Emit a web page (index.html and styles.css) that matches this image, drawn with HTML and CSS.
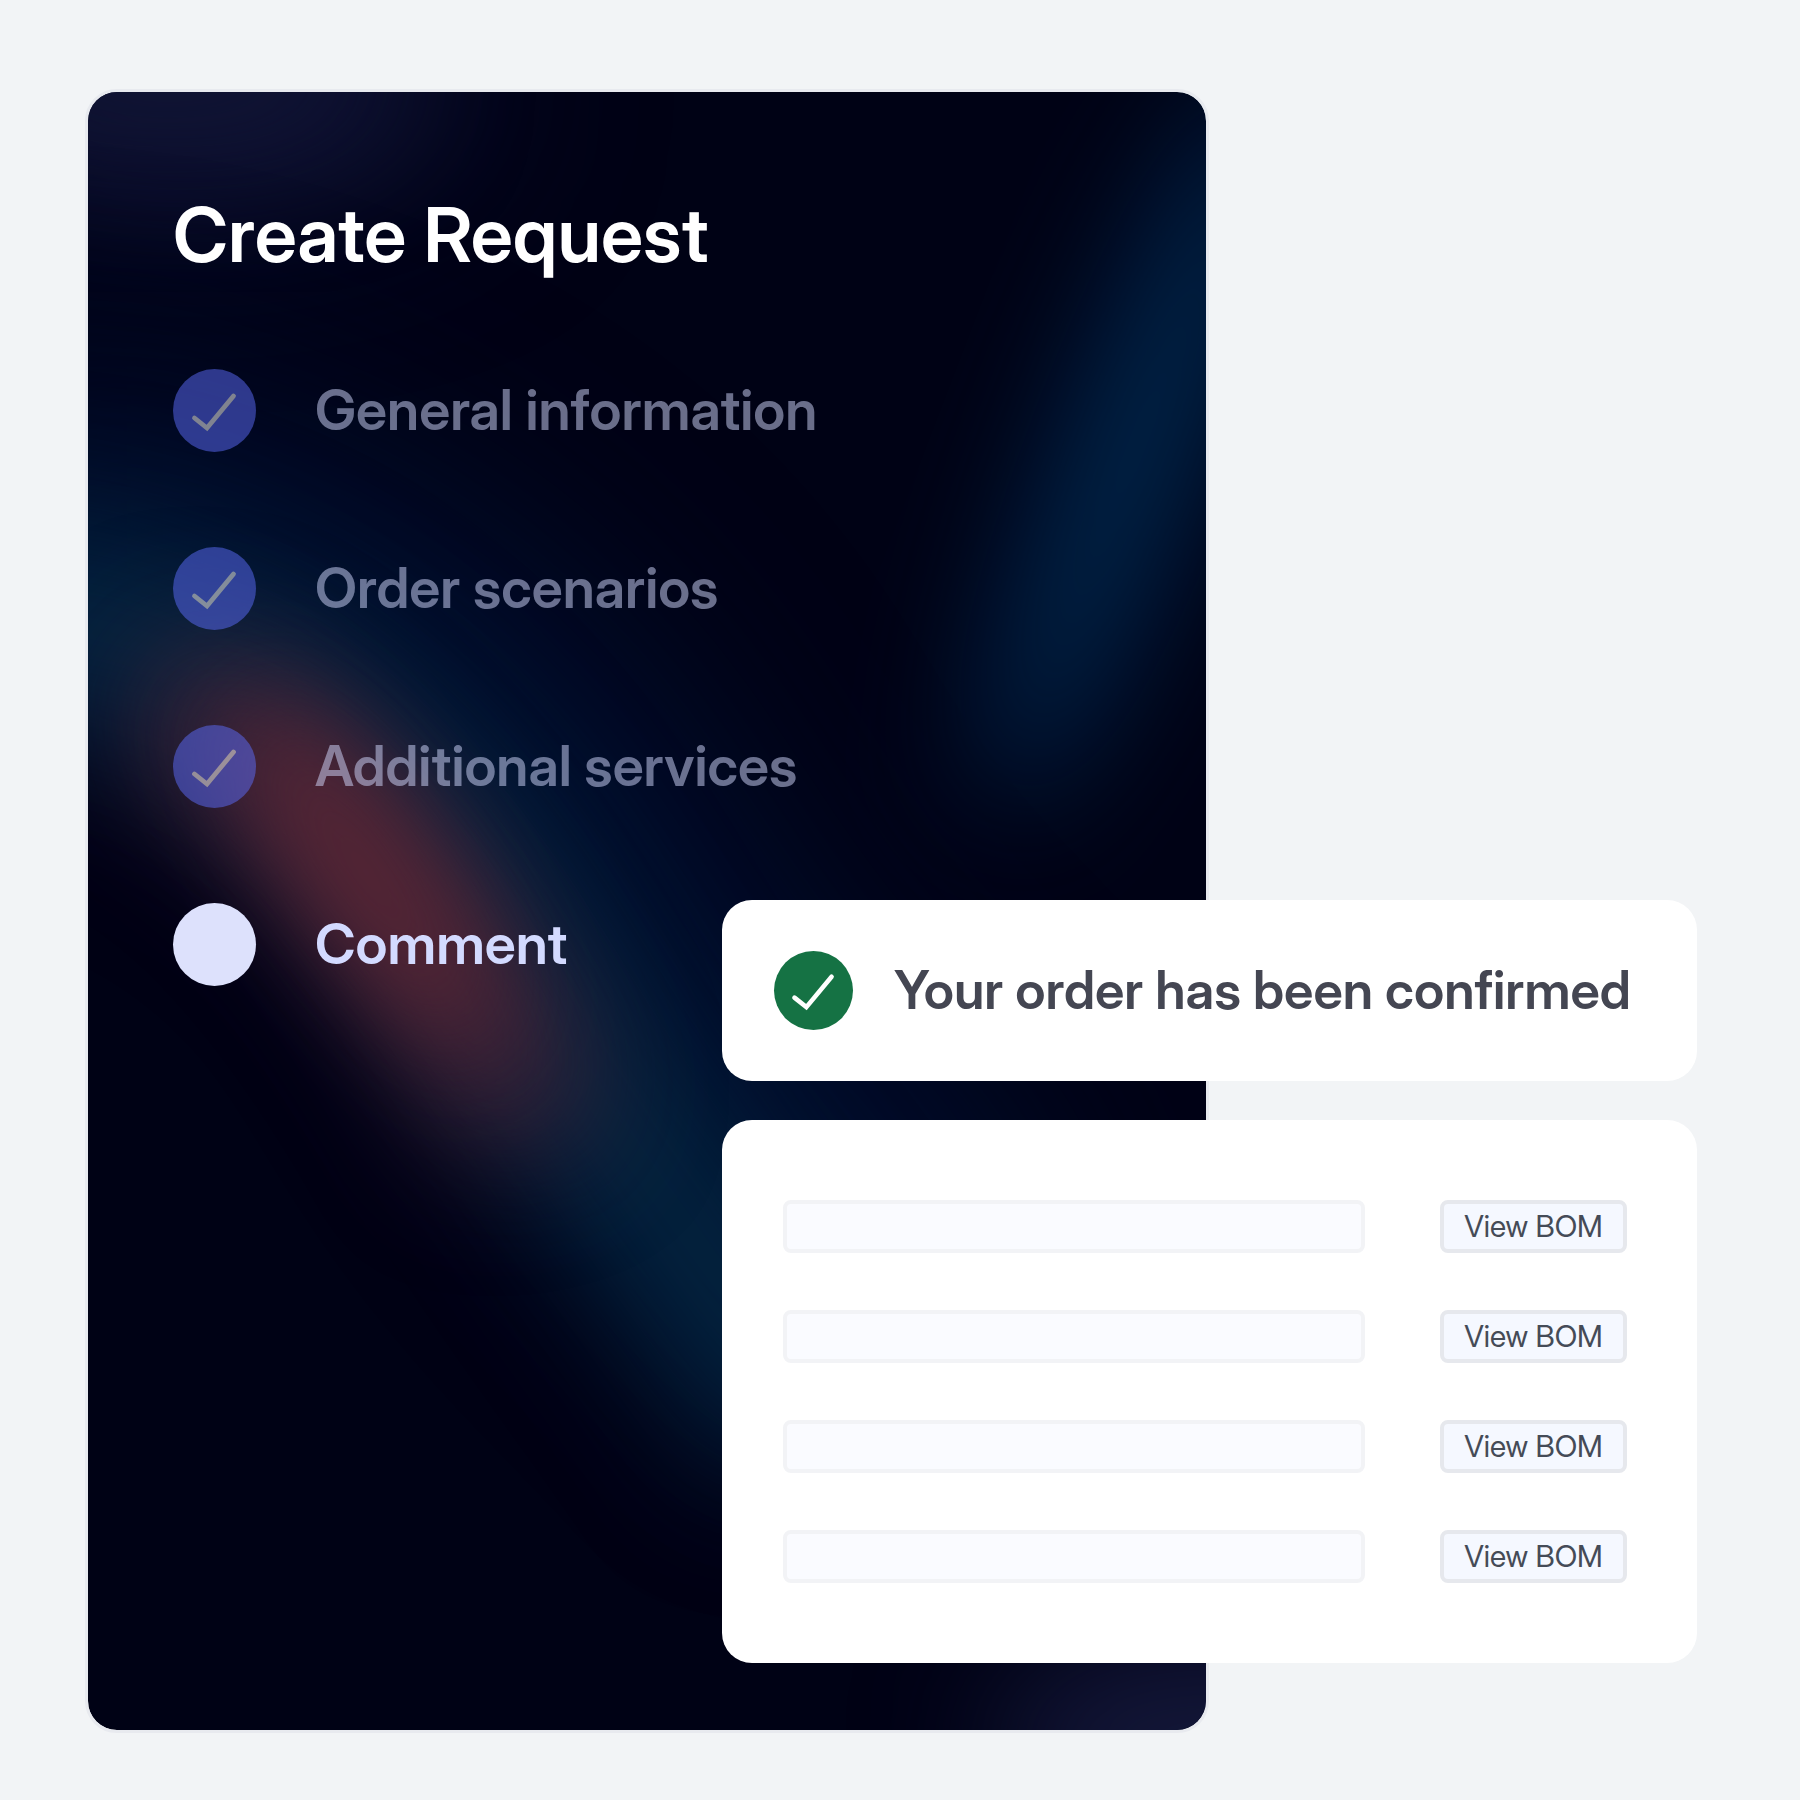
FILE: index.html
```html
<!DOCTYPE html>
<html lang="en">
<head>
    <meta charset="UTF-8">
    <meta name="viewport" content="width=device-width, initial-scale=1.0">
    <title>Create Request</title>
    <link rel="stylesheet" href="styles.css">
</head>
<body>
    <!-- Check mark shared by all icons -->
    <svg class="sprite" aria-hidden="true">
        <symbol id="check" viewBox="0 0 83 83">
            <path d="M21.5 49 L34 59 L60.5 27" fill="none" stroke="#FFFFFF" stroke-width="4.8" stroke-linecap="round"/>
        </symbol>
    </svg>

    <main class="stage">
        <!-- Request Steps -->
        <section class="request-panel">
            <svg class="glow" viewBox="0 0 1118 1638" preserveAspectRatio="none" color-interpolation-filters="sRGB" aria-hidden="true">
                <defs>
                    <filter id="blur-wide" x="-100%" y="-100%" width="300%" height="300%"><feGaussianBlur stdDeviation="95"/></filter>
                    <filter id="blur-mid" x="-100%" y="-100%" width="300%" height="300%"><feGaussianBlur stdDeviation="65"/></filter>
                    <filter id="blur-tight" x="-100%" y="-100%" width="300%" height="300%"><feGaussianBlur stdDeviation="55"/></filter>
                </defs>
                <ellipse cx="110" cy="-10" rx="270" ry="110" fill="#10143A" filter="url(#blur-wide)"/>
                <ellipse cx="80" cy="-10" rx="230" ry="70" fill="#111534" filter="url(#blur-mid)"/>
                <ellipse cx="1130" cy="1650" rx="230" ry="100" fill="#14183A" filter="url(#blur-mid)"/>
                <path d="M-120 440 C140 440 380 580 500 800 S740 1080 860 1240" fill="none" stroke="#000D2C" stroke-width="340" filter="url(#blur-wide)"/>
                <path d="M-150 520 C120 510 300 660 430 880 S620 1160 740 1340" fill="none" stroke="#03233F" stroke-width="190" filter="url(#blur-mid)"/>
                <path d="M70 610 C200 660 330 810 450 1040" fill="none" stroke="#432235" stroke-width="130" filter="url(#blur-mid)"/>
                <ellipse cx="278" cy="780" rx="210" ry="55" transform="rotate(55 278 780)" fill="#5F2634" filter="url(#blur-tight)"/>
                <ellipse cx="1050" cy="350" rx="65" ry="390" transform="rotate(21 1050 350)" fill="#002850" filter="url(#blur-mid)"/>
            </svg>
            <h1>Create Request</h1>
            <ol class="steps">
                <li class="step done">
                    <span class="step-icon"><svg aria-hidden="true"><use href="#check"/></svg></span>
                    <span>General information</span>
                </li>
                <li class="step done">
                    <span class="step-icon"><svg aria-hidden="true"><use href="#check"/></svg></span>
                    <span>Order scenarios</span>
                </li>
                <li class="step done">
                    <span class="step-icon"><svg aria-hidden="true"><use href="#check"/></svg></span>
                    <span>Additional services</span>
                </li>
                <li class="step" aria-current="step">
                    <span class="step-icon"></span>
                    <span>Comment</span>
                </li>
            </ol>
        </section>

        <!-- Confirmation and Orders -->
        <div class="cards">
            <section class="card confirmation">
                <span class="confirm-icon"><svg aria-hidden="true"><use href="#check"/></svg></span>
                <p>Your order has been confirmed</p>
            </section>
            <section class="card orders">
                <div class="order-row">
                    <div class="placeholder"></div>
                    <button type="button">View BOM</button>
                </div>
                <div class="order-row">
                    <div class="placeholder"></div>
                    <button type="button">View BOM</button>
                </div>
                <div class="order-row">
                    <div class="placeholder"></div>
                    <button type="button">View BOM</button>
                </div>
                <div class="order-row">
                    <div class="placeholder"></div>
                    <button type="button">View BOM</button>
                </div>
            </section>
        </div>
    </main>
</body>
</html>
```
FILE: styles.css
```css
/* General Styles */
* {
    box-sizing: border-box;
}

body {
    font-family: 'Inter Display', 'Inter', sans-serif;
    margin: 0;
    background: #F2F4F6;
}

.sprite {
    display: none;
}

/* The cards share the middle column with the panel and overlap it */
.stage {
    display: grid;
    grid-template-columns: 637fr 487fr 488fr;
    min-height: 100vh;
    padding: 89px 103px 67px 85px;
}

/* Request Steps */
.request-panel {
    position: relative;
    grid-column: 1 / 3;
    grid-row: 1;
    overflow: hidden;
    padding: 94px 85px;
    border: 3px solid #E8EAEF;
    border-radius: 32px;
    background: #000215;
    background-clip: padding-box;
}

.glow {
    position: absolute;
    inset: 0;
    width: 100%;
    height: 100%;
}

.request-panel h1 {
    position: relative;
    margin: 0;
    font-size: 76px;
    font-weight: 600;
    line-height: 96px;
    color: #FFFFFF;
}

.steps {
    position: relative;
    display: grid;
    gap: 95px;
    margin: 87px 0 0;
    padding: 0;
    list-style: none;
}

.step {
    display: flex;
    align-items: center;
    gap: 59px;
    font-size: 56px;
    font-weight: 600;
    line-height: 83px;
    color: #D3DAFF;
}

.step.done {
    opacity: 0.5;
}

.step-icon {
    width: 83px;
    height: 83px;
    border-radius: 50%;
    background: #DDE1FC;
}

.step.done .step-icon {
    background: #5C6CFA;
}

.step-icon svg, .confirm-icon svg {
    display: block;
    width: 100%;
    height: 100%;
}

/* Cards */
.cards {
    position: relative;
    grid-column: 2 / 4;
    grid-row: 1;
    align-self: end;
    display: grid;
    gap: 39px;
    margin-bottom: 70px;
}

.card {
    border-radius: 30px;
    background: #FFFFFF;
}

.confirmation {
    display: flex;
    align-items: center;
    gap: 41px;
    padding: 51px 40px 51px 52px;
}

.confirmation p {
    margin: 0;
    font-size: 53px;
    font-weight: 600;
    line-height: 79px;
    color: #444652;
}

.confirm-icon {
    flex: none;
    width: 79px;
    height: 79px;
    border-radius: 50%;
    background: #157244;
}

.orders {
    display: grid;
    gap: 57px;
    padding: 80px 70px 80px 61px;
}

.order-row {
    display: grid;
    grid-template-columns: 1fr 187px;
    gap: 75px;
}

.placeholder, .order-row button {
    height: 53px;
    border: 4px solid #F2F3F6;
    border-radius: 8px;
    background: #FAFBFF;
}

.order-row button {
    padding: 0;
    border-color: #E6E8ED;
    background: #F5F8FF;
    font-family: inherit;
    font-size: 30px;
    line-height: 45px;
    color: #454B57;
    cursor: pointer;
}
```
